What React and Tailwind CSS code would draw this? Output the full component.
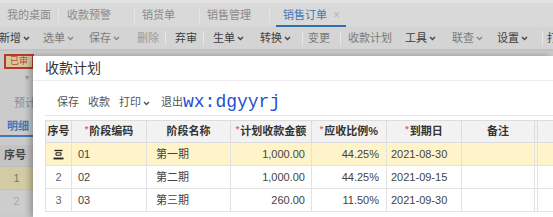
import React from "react";

const font = { fontFamily: '"Liberation Sans", "Noto Sans CJK SC", sans-serif' };

const tabs = [
  { label: "我的桌面", w: "w-[59px]", pl: "pl-[7px]" },
  { label: "收款预警", w: "w-[76px]", pl: "pl-[8px]" },
  { label: "销货单", w: "w-[65px]", pl: "pl-[7px]" },
  { label: "销售管理", w: "w-[70px]", pl: "pl-[7px]" },
];

const tools = [
  { label: "新增", w: "w-[44px]", chev: true, dark: true },
  { label: "选单", w: "w-[46px]", chev: true },
  { label: "保存", w: "w-[48px]", chev: true },
  { label: "删除", w: "w-[28px]", light: true, sep: "mr-[9px]" },
  { label: "弃审", w: "w-[28px]", dark: true, sep: "mr-[9px]" },
  { label: "生单", w: "w-[47px]", chev: true, dark: true },
  { label: "转换", w: "w-[42px]", chev: true, dark: true, sep: "mr-[5px]" },
  { label: "变更", w: "w-[32px]", sep: "mr-[7px]" },
  { label: "收款计划", w: "w-[57px]" },
  { label: "工具", w: "w-[47px]", chev: true, dark: true },
  { label: "联查", w: "w-[45px]", chev: true },
  { label: "设置", w: "w-[45px]", chev: true, dark: true, sep: "mr-[4px]" },
  { label: "打", w: "w-[12px]", dark: true },
];

const rows = [
  { no: null, code: "01", name: "第一期", amt: "1,000.00", pct: "44.25%", date: "2021-08-30", hl: true },
  { no: "2", code: "02", name: "第二期", amt: "1,000.00", pct: "44.25%", date: "2021-09-15" },
  { no: "3", code: "03", name: "第三期", amt: "260.00", pct: "11.50%", date: "2021-09-30" },
];

function Chev({ color = "#555" }) {
  return (
    <svg width="7" height="5" viewBox="0 0 7 5" className="ml-[2px] mt-[1px]">
      <path d="M1 1l2.5 2.5L6 1" fill="none" stroke={color} strokeWidth="1.4" />
    </svg>
  );
}

function Req({ children }) {
  return (
    <span>
      <span className="text-[#e0607a] text-[9px] relative top-[-3px] mr-[1px]">*</span>
      {children}
    </span>
  );
}

function InsertIcon() {
  return (
    <svg width="11" height="11" viewBox="0 0 11 11" className="inline-block">
      <path d="M1.5 1.5h8" stroke="#222" strokeWidth="1.3" />
      <path d="M3 3.8h5M3 6.2h5M3 3.8v2.4M8 3.8v2.4" stroke="#222" strokeWidth="1.1" fill="none" />
      <path d="M0.5 9.5h10" stroke="#222" strokeWidth="1.8" />
    </svg>
  );
}

export default function App() {
  return (
    <div style={font} className="relative w-[553px] h-[217px] overflow-hidden bg-[#cbcbcb] text-[11px]">
      {/* tab bar */}
      <div className="h-[27px] bg-[#d9d9d9] border-t-[3px] border-[#e2e2e2] flex items-center text-[#8a8a8a]">
        {tabs.map((t) => (
          <div key={t.label} className={`${t.w} ${t.pl} h-[15px] leading-[15px] border-r border-[#e6e6e6]`}>
            {t.label}
          </div>
        ))}
        <div className="relative h-full flex items-center pl-[13px] w-[76px]">
          <span className="text-[#3f78b5]">销售订单</span>
          <span className="ml-[6px] text-[#b8b8b8] text-[12px]">×</span>
          <div className="absolute left-[6px] right-0 bottom-0 h-[2px] bg-[#2e6fb0]" />
        </div>
      </div>

      {/* toolbar */}
      <div className="h-[24px] bg-[#d4d4d4] border-b-2 border-[#c2c2c2] flex items-center -ml-[1px]">
        {tools.map((t) => (
          <React.Fragment key={t.label}>
            <div
              className={`${t.w} shrink-0 flex items-center whitespace-nowrap ${
                t.dark ? "text-[#3d3d3d]" : t.light ? "text-[#9b9b9b]" : "text-[#7a7a7a]"
              }`}
            >
              {t.label}
              {t.chev && <Chev color={t.dark ? "#444" : "#888"} />}
            </div>
            {t.sep && <div className={`w-px h-[14px] bg-[#e8e8e8] shrink-0 ${t.sep}`} />}
          </React.Fragment>
        ))}
      </div>

      {/* page content under dialog */}
      <div className="pl-[4px] pt-[3px]">
        <div className="w-[30px] h-[15px] border-2 border-[#b53a2e] bg-[#d7c79c] text-[#b8493a] text-[9px] leading-[11px] pl-[4px]">
          已审
        </div>
      </div>
      <div className="pl-[25px] mt-[5px] text-[#999] text-[8px] leading-[8px]">▾</div>
      <div className="pl-[14px] mt-[13px] text-[#8c8c8c]">预计</div>
      <div className="mt-[6px] w-[33px] border-b-2 border-[#3f78b5] pl-[7px] pb-[1px] text-[#3f78b5] font-bold">明细</div>
      <div className="h-[8px]" />
      <div className="w-[33px] h-[22px] bg-[#c3c3c3] flex items-center pl-[4px] font-bold text-[#444] border-b border-[#bdbdbd]">
        序号
      </div>
      <div className="w-[33px] h-[23px] bg-[#d3cba3] flex items-center justify-center text-[#777] border-b border-[#c0c0c0]">
        1
      </div>
      <div className="w-[33px] h-[23px] bg-[#cdcdcd] flex items-center justify-center text-[#aaa]">2</div>

      {/* dialog */}
      <div className="absolute left-[33px] top-[56px] right-0 bottom-0 bg-white shadow-[-3px_0_6px_rgba(0,0,0,0.28)]">
        <div className="h-[25px] border-b border-[#ececec] flex items-center pl-[12px] text-[14px] text-[#333]">
          收款计划
        </div>
        <div className="h-[34px] flex items-center pl-[24px] pt-[9px] text-[#555]">
          <span>保存</span>
          <span className="ml-[9px]">收款</span>
          <span className="ml-[9px] flex items-center">
            打印
            <Chev />
          </span>
          <span className="ml-[11px]">退出</span>
          <span
            className="text-[18px] text-[#1f4fd1] leading-[20px] mt-[-2px]"
            style={{ fontFamily: '"Liberation Mono", monospace' }}
          >
            wx:dgyyrj
          </span>
        </div>
        <div className="ml-[12px] border-t border-[#e6e6e6]" />
        <table className="ml-[12px] mt-[4px] border-collapse table-fixed text-[11px]" style={{ width: 560 }}>
          <colgroup>
            <col className="w-[26px]" />
            <col className="w-[75px]" />
            <col className="w-[84px]" />
            <col className="w-[81px]" />
            <col className="w-[75px]" />
            <col className="w-[75px]" />
            <col className="w-[73px]" />
            <col className="w-[3px]" />
            <col />
          </colgroup>
          <thead>
            <tr className="h-[22px] bg-[#f2f2f2] text-[#333] font-bold">
              <th className="border border-[#dcdcdc] font-bold">序号</th>
              <th className="border border-[#dcdcdc] font-bold"><Req>阶段编码</Req></th>
              <th className="border border-[#dcdcdc] font-bold">阶段名称</th>
              <th className="border border-[#dcdcdc] font-bold"><Req>计划收款金额</Req></th>
              <th className="border border-[#dcdcdc] font-bold"><Req>应收比例%</Req></th>
              <th className="border border-[#dcdcdc] font-bold"><Req>到期日</Req></th>
              <th className="border border-[#dcdcdc] font-bold">备注</th>
              <th className="border-y border-[#dcdcdc]" />
              <th className="border border-[#dcdcdc]" />
            </tr>
          </thead>
          <tbody>
            {rows.map((r) => (
              <tr key={r.code} className={`h-[23px] ${r.hl ? "bg-[#fff4c9]" : "bg-white"} text-[#444]`}>
                <td className="border border-[#e2e2e2] text-center text-[#666]">{r.no ?? <InsertIcon />}</td>
                <td className="border border-[#e2e2e2] pl-[6px]">{r.code}</td>
                <td className="border border-[#e2e2e2] pl-[9px]">{r.name}</td>
                <td className="border border-[#e2e2e2] text-right pr-[6px]">{r.amt}</td>
                <td className="border border-[#e2e2e2] text-right pr-[7px]">{r.pct}</td>
                <td className="border border-[#e2e2e2] pl-[4px]">{r.date}</td>
                <td className="border border-[#e2e2e2]" />
                <td className="border-y border-[#e2e2e2]" />
                <td className="border border-[#e2e2e2]" />
              </tr>
            ))}
          </tbody>
        </table>
      </div>
    </div>
  );
}
